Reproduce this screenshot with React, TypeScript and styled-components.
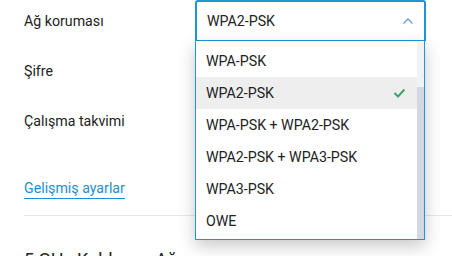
import styled, { createGlobalStyle } from "styled-components";

const GlobalStyle = createGlobalStyle`
  body {
    margin: 0;
    background: #fff;
    font-family: Roboto, "Liberation Sans", sans-serif;
    color: #222;
    overflow: hidden;
  }
`;

const options = [
  "WPA-PSK",
  "WPA2-PSK",
  "WPA-PSK + WPA2-PSK",
  "WPA2-PSK + WPA3-PSK",
  "WPA3-PSK",
  "OWE",
];

const selected = "WPA2-PSK";

const Page = styled.div`
  width: 452px;
  height: 256px;
  padding-left: 24px;
  box-sizing: border-box;
  overflow: hidden;
`;

const Rows = styled.div`
  display: flex;
  flex-direction: column;
  gap: 9px;
`;

const Row = styled.div`
  display: grid;
  grid-template-columns: 171px 231px;
  height: 41px;
  align-items: center;
`;

const Label = styled.div`
  font-size: 14.2px;
  color: #222;
`;

const SelectWrap = styled.div`
  position: relative;
  height: 41px;
  z-index: 2;
`;

const SelectBox = styled.div`
  height: 41px;
  box-sizing: border-box;
  border: 2px solid #1b97d3;
  border-bottom-width: 1px;
  border-radius: 3px 3px 0 0;
  display: flex;
  align-items: center;
  justify-content: space-between;
  padding: 0 10px 0 10px;
  font-size: 14.2px;
  color: #222;
`;

const Menu = styled.div`
  position: absolute;
  top: 100%;
  left: 0;
  width: 230px;
  box-sizing: border-box;
  border: 1px solid #1b97d3;
  border-top: none;
  background: #fff;
  padding: 4px 0 2px;
  box-shadow: 0 6px 16px rgba(0, 0, 0, 0.22);
  display: flex;
`;

const List = styled.div`
  flex: 1;
`;

const Item = styled.div<{ $active?: boolean }>`
  height: 32px;
  display: flex;
  align-items: center;
  justify-content: space-between;
  padding: 0 11px 0 10px;
  font-size: 14.2px;
  color: #222;
  background: ${(p) => (p.$active ? "#eeeeef" : "transparent")};
`;

const Scrollbar = styled.div`
  width: 7px;
  background: #f1f2f6;
  display: flex;
  flex-direction: column;
  margin-top: -4px;
  margin-bottom: -2px;
`;

const Thumb = styled.div`
  margin-top: 46px;
  flex: 1;
  background: #d4d7e1;
`;

const AdvancedLink = styled.a`
  display: inline-block;
  margin-top: 38px;
  font-size: 14.2px;
  color: #1b8fd0;
  text-decoration: none;
  border-bottom: 1px solid #1b8fd0;
  padding-bottom: 1px;
  line-height: 18px;
`;

const Divider = styled.div`
  margin-top: 16px;
  height: 1px;
  background: #e8e8e8;
`;

const Heading = styled.div`
  margin-top: 33px;
  font-size: 18px;
  line-height: 22px;
  color: #222;
`;

const Chevron = () => (
  <svg width="12" height="8" viewBox="0 0 12 8">
    <path d="M1.5 6.5 6 2l4.5 4.5" fill="none" stroke="#6b9dc8" strokeWidth="1.3" />
  </svg>
);

const Check = () => (
  <svg width="13" height="10" viewBox="0 0 13 10">
    <path d="M1.5 5l3.5 3.5L11.5 1.5" fill="none" stroke="#3aa66c" strokeWidth="2" />
  </svg>
);

const App = () => {
  return (
    <Page>
      <GlobalStyle />
      <Rows>
        <Row>
          <Label>Ağ koruması</Label>
          <SelectWrap>
            <SelectBox>
              <span>{selected}</span>
              <Chevron />
            </SelectBox>
            <Menu>
              <List>
                {options.map((o) => (
                  <Item key={o} $active={o === selected}>
                    <span>{o}</span>
                    {o === selected ? <Check /> : null}
                  </Item>
                ))}
              </List>
              <Scrollbar>
                <Thumb />
              </Scrollbar>
            </Menu>
          </SelectWrap>
        </Row>
        <Row>
          <Label>Şifre</Label>
        </Row>
        <Row>
          <Label>Çalışma takvimi</Label>
        </Row>
      </Rows>
      <AdvancedLink>Gelişmiş ayarlar</AdvancedLink>
      <Divider />
      <Heading>5 GHz Kablosuz Ağ</Heading>
    </Page>
  );
};

export default App;
